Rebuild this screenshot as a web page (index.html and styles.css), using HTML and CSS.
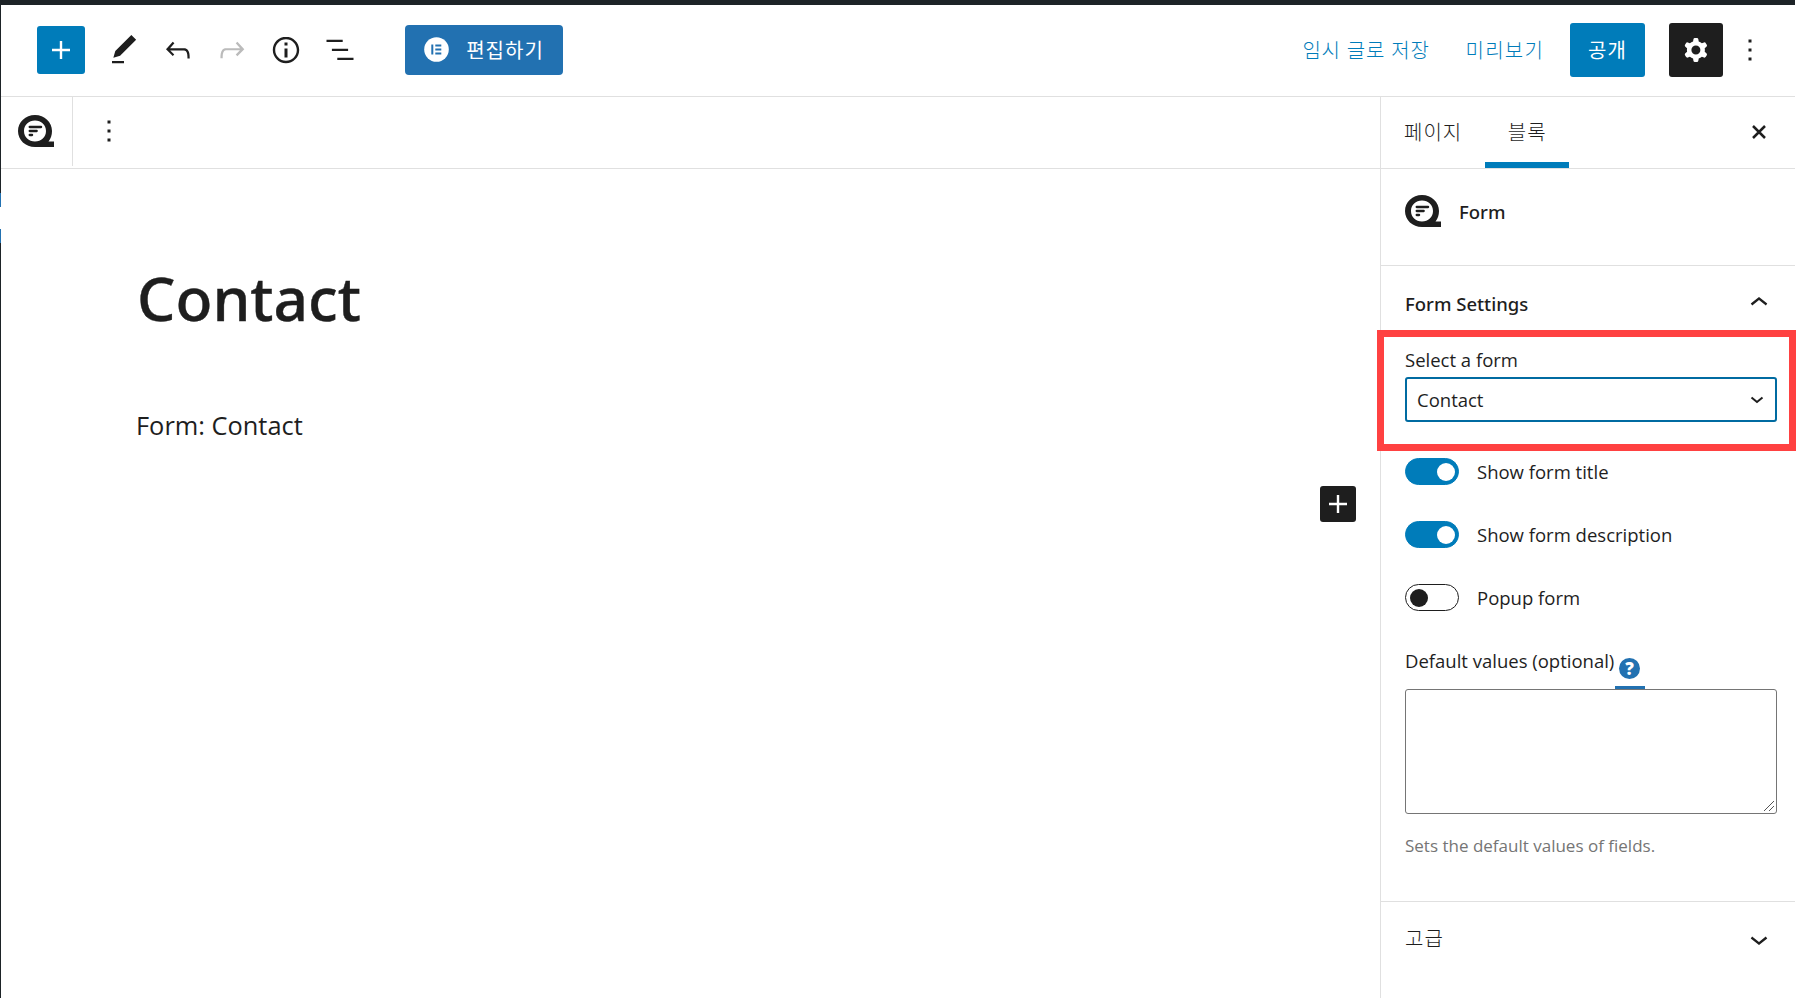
FILE: index.html
```html
<!DOCTYPE html>
<html lang="ko">
<head>
  <meta charset="UTF-8">
  <meta name="viewport" content="width=device-width, initial-scale=1.0">
  <title>Contact</title>
  <link rel="stylesheet" href="styles.css">
</head>
<body>

  <!-- Shared icon -->
  <svg class="defs" width="0" height="0">
    <symbol id="form-icon" viewBox="0 0 36 32">
      <path fill-rule="evenodd" d="M17 0C7.500 0 0 7 0 16s7.500 16 17 16h19v-5.500h-5.500C32.800 23.800 34 20 34 16 34 7 26.500 0 17 0zm0 5.500c6.200 0 11 4.600 11 10.500s-4.800 10.500-11 10.500S6 21.900 6 16 10.800 5.500 17 5.500z"/>
      <path d="M11.700 12h11.400M11.700 16h7M11.700 20h2.400" fill="none" stroke="currentColor" stroke-width="2.300" stroke-linecap="round"/>
    </symbol>
  </svg>

  <!-- Admin bar and collapsed admin menu -->
  <div class="admin-bar"></div>
  <div class="admin-menu">
    <span class="menu-current"></span>
    <span class="menu-open"></span>
    <span class="menu-current"></span>
  </div>

  <div class="editor">
    <!-- Header -->
    <header class="editor-header">
      <div class="header-tools">
        <button class="icon-button inserter">
          <svg class="icon" viewBox="0 0 24 24"><path d="M18 11.200h-5.200V6h-1.600v5.200H6v1.600h5.200V18h1.600v-5.200H18z"/></svg>
        </button>
        <button class="icon-button">
          <svg class="icon" viewBox="0 0 24 24"><path d="M20.100 5.100L16.900 2 6.200 12.700l-1.300 4.400 4.500-1.300L20.100 5.100zM4 20.800h8v-1.500H4v1.500z"/></svg>
        </button>
        <button class="icon-button">
          <svg class="icon" viewBox="0 0 24 24"><path d="M18.300 11.700c-.6-.6-1.400-.9-2.300-.9H6.700l2.900-3.300-1.100-1-4.500 5L8.500 16l1-1-2.700-2.700H16c.5 0 .9.2 1.300.5 1 1 1 3.400 1 4.500v.3h1.500v-.2c0-1.500 0-4.300-1.500-5.700z"/></svg>
        </button>
        <button class="icon-button disabled">
          <svg class="icon" viewBox="0 0 24 24"><path d="M15.600 6.500l-1.100 1 2.900 3.300H8c-.9 0-1.700.3-2.300.9-1.400 1.500-1.400 4.200-1.400 5.600v.2h1.500v-.3c0-1.100 0-3.500 1-4.500.3-.3.7-.5 1.300-.5h9.200L14.500 15l1.100 1.100 4.600-4.600-4.600-5z"/></svg>
        </button>
        <button class="icon-button">
          <svg class="icon" viewBox="0 0 24 24"><path fill-rule="evenodd" d="M12 3.200c-4.800 0-8.800 3.900-8.800 8.800 0 4.800 3.900 8.800 8.800 8.800 4.800 0 8.800-3.900 8.800-8.800 0-4.800-4-8.800-8.800-8.800zm0 16c-4 0-7.200-3.300-7.200-7.200C4.800 8 8 4.800 12 4.800s7.200 3.300 7.200 7.200c0 4-3.200 7.200-7.200 7.200zM11 17h2v-6h-2v6zm0-8h2V7h-2v2z"/></svg>
        </button>
        <button class="icon-button">
          <svg class="icon" viewBox="0 0 24 24"><path d="M13.800 5.200H3v1.500h10.800V5.200zm-3.600 12v1.500H21v-1.500H10.200zm7.200-6H6.600v1.500h10.800v-1.500z"/></svg>
        </button>
        <button class="elementor-button">
          <svg class="elementor-icon" viewBox="0 0 25 25">
            <circle cx="12.500" cy="12.500" r="12.300" fill="#fff"/>
            <path fill="#2271b1" d="M7.300 7.500h2v10h-2zM11.300 7.500h6v2h-6zM11.300 11.500h6v2h-6zM11.300 15.500h6v2h-6z"/>
          </svg>
          <span>편집하기</span>
        </button>
      </div>
      <div class="header-settings">
        <button class="text-button">임시 글로 저장</button>
        <button class="text-button preview">미리보기</button>
        <button class="publish-button">공개</button>
        <button class="settings-button">
          <svg class="icon" viewBox="0 0 24 24"><path fill-rule="evenodd" d="M10.289 4.836A1 1 0 0111.275 4h1.306a1 1 0 01.987.836l.244 1.466c.787.26 1.503.679 2.108 1.218l1.393-.522a1 1 0 011.216.437l.653 1.130a1 1 0 01-.23 1.273l-1.148.944a6.025 6.025 0 010 2.435l1.149.946a1 1 0 01.23 1.272l-.653 1.130a1 1 0 01-1.216.437l-1.394-.522c-.605.54-1.320.958-2.108 1.218l-.244 1.466a1 1 0 01-.987.836h-1.306a1 1 0 01-.986-.836l-.244-1.466a5.995 5.995 0 01-2.108-1.218l-1.394.522a1 1 0 01-1.217-.436l-.653-1.131a1 1 0 01.23-1.272l1.149-.946a6.026 6.026 0 010-2.435l-1.148-.944a1 1 0 01-.23-1.272l.653-1.131a1 1 0 011.217-.437l1.393.522a5.994 5.994 0 012.108-1.218l.244-1.466zM14.929 12a3 3 0 11-6 0 3 3 0 016 0z"/></svg>
        </button>
        <button class="more-button">
          <svg class="icon" viewBox="0 0 24 24"><path d="M13 19h-2v-2h2v2zm0-6h-2v-2h2v2zm0-6h-2V5h2v2z"/></svg>
        </button>
      </div>
    </header>

    <div class="editor-body">
      <!-- Content -->
      <main class="content">
        <div class="block-toolbar">
          <div class="block-type">
            <svg class="form-icon"><use href="#form-icon"/></svg>
          </div>
          <svg class="icon" viewBox="0 0 24 24"><path d="M13 19h-2v-2h2v2zm0-6h-2v-2h2v2zm0-6h-2V5h2v2z"/></svg>
        </div>
        <div class="canvas">
          <h1 class="post-title">Contact</h1>
          <p class="form-block">Form: Contact</p>
          <button class="block-appender">
            <svg class="icon" viewBox="0 0 24 24"><path d="M18 11.200h-5.200V6h-1.600v5.200H6v1.600h5.200V18h1.600v-5.200H18z"/></svg>
          </button>
        </div>
      </main>

      <!-- Sidebar -->
      <aside class="sidebar">
        <div class="tabs">
          <button class="tab">페이지</button>
          <button class="tab active">블록</button>
          <button class="close-button">
            <svg class="close-icon" viewBox="0 0 16 16"><path d="M2 2l12 12M14 2L2 14"/></svg>
          </button>
        </div>

        <div class="block-card">
          <svg class="form-icon"><use href="#form-icon"/></svg>
          <h2 class="block-name">Form</h2>
        </div>

        <section class="panel">
          <div class="panel-title">
            <h2>Form Settings</h2>
            <svg class="icon" viewBox="0 0 24 24"><path d="M6.500 12.400L12 8l5.500 4.400-.9 1.200L12 10l-4.500 3.600-1-1.200z"/></svg>
          </div>

          <div class="select-field">
            <label class="label">Select a form</label>
            <div class="select">
              <span>Contact</span>
              <svg class="select-arrow" viewBox="0 0 14 8"><path d="M1.500 1.500L7 6l5.500-4.500"/></svg>
            </div>
            <div class="highlight"></div>
          </div>

          <div class="toggle-row">
            <span class="toggle on"></span>
            <span>Show form title</span>
          </div>
          <div class="toggle-row">
            <span class="toggle on"></span>
            <span>Show form description</span>
          </div>
          <div class="toggle-row">
            <span class="toggle"></span>
            <span>Popup form</span>
          </div>

          <div class="textarea-label">
            <span class="label">Default values (optional)</span>
            <a class="help-link"><span class="help-icon">?</span></a>
          </div>
          <div class="textarea-field">
            <textarea class="textarea"></textarea>
            <svg class="resize-grip" viewBox="0 0 12 12"><path d="M1 11L11 1M6 11l5-5"/></svg>
          </div>
          <p class="help-text">Sets the default values of fields.</p>
        </section>

        <section class="panel-title advanced">
          <h2>고급</h2>
          <svg class="icon" viewBox="0 0 24 24"><path d="M17.500 11.600L12 16l-5.500-4.400.9-1.200L12 14l4.500-3.600 1 1.200z"/></svg>
        </section>
      </aside>
    </div>
  </div>

</body>
</html>
```
FILE: styles.css
```css
/* Global styles */
* {
  box-sizing: border-box;
}

body {
  font-family: "Open Sans", "Noto Sans CJK KR", sans-serif;
  font-size: 18.5px;
  margin: 0;
  height: 998px;
  overflow: hidden;
  background-color: #fff;
  color: #1e1e1e;
  display: grid;
  grid-template: 5px 993px / 1px 1794px;
}

button {
  font-family: inherit;
  font-size: inherit;
  color: inherit;
  background: none;
  border: none;
  padding: 0;
  display: flex;
  align-items: center;
  justify-content: center;
  white-space: nowrap;
}

h1, h2, p {
  margin: 0;
}

.defs {
  position: absolute;
}

.icon {
  width: 36px;
  height: 36px;
  fill: currentColor;
  flex: none;
}

.form-icon {
  width: 36px;
  height: 32px;
  fill: currentColor;
  flex: none;
}

/* Admin bar and menu */
.admin-bar {
  grid-column: 1 / 3;
  background-color: #1d2327;
}

.admin-menu {
  background-color: #1d2327;
  padding-top: 188px;
}

.admin-menu span {
  display: block;
}

.menu-current {
  height: 14px;
  background-color: #2271b1;
}

.menu-open {
  height: 22px;
  background-color: #fff;
}

/* Header */
.editor {
  display: flex;
  flex-direction: column;
}

.editor-header {
  height: 92px;
  flex: none;
  display: flex;
  justify-content: space-between;
  align-items: center;
  padding: 0 27px 2px 36px;
  border-bottom: 1px solid #e0e0e0;
}

.header-tools,
.header-settings {
  display: flex;
  align-items: center;
}

.header-tools,
.header-settings,
.tabs {
  font-family: "Noto Sans", "Noto Sans CJK KR", sans-serif;
}

.icon-button {
  width: 54px;
  height: 54px;
}

.inserter {
  width: 48px;
  height: 48px;
  margin-right: 12px;
  border-radius: 3px;
  background-color: #007cba;
  color: #fff;
}

.disabled {
  color: #bbb;
}

.elementor-button {
  width: 158px;
  height: 50px;
  margin-left: 38px;
  gap: 17px;
  border-radius: 4px;
  background-color: #2271b1;
  color: #fff;
  font-size: 20px;
  letter-spacing: 1px;
}

.elementor-icon {
  width: 25px;
  height: 25px;
}

.header-settings {
  font-size: 20px;
}

.text-button {
  color: #007cba;
  font-weight: 300;
  letter-spacing: 0.8px;
}

.preview {
  margin: 0 26px 0 36px;
  letter-spacing: 1.2px;
}

.publish-button {
  width: 75px;
  height: 54px;
  border-radius: 3px;
  background-color: #007cba;
  color: #fff;
  letter-spacing: 1px;
}

.settings-button {
  width: 54px;
  height: 54px;
  margin-left: 24px;
  border-radius: 3px;
  background-color: #1e1e1e;
  color: #fff;
}

.more-button {
  margin-left: 9px;
}

/* Content */
.editor-body {
  flex: 1;
  display: flex;
}

.content {
  flex: 1;
}

.block-toolbar {
  height: 72px;
  display: flex;
  align-items: center;
  gap: 18px;
  padding-bottom: 3px;
  border-bottom: 1px solid #e0e0e0;
}

.block-type {
  width: 72px;
  height: 70px;
  display: flex;
  align-items: center;
  padding: 0 0 1px 17px;
  border-right: 1px solid #e0e0e0;
}

.canvas {
  padding: 87px 24px 0 135px;
  display: flex;
  flex-direction: column;
}

.post-title {
  font-family: "Noto Sans", sans-serif;
  font-size: 60.5px;
  font-weight: 500;
  line-height: 84px;
  padding-left: 1px;
  -webkit-text-stroke: 0.4px currentColor;
}

.form-block {
  margin-top: 67px;
  font-size: 25.4px;
  line-height: 36px;
}

.block-appender {
  width: 36px;
  height: 36px;
  margin-top: 43px;
  align-self: flex-end;
  border-radius: 3px;
  background-color: #1e1e1e;
  color: #fff;
}

/* Sidebar */
.sidebar {
  width: 415px;
  border-left: 1px solid #e0e0e0;
}

.tabs {
  height: 72px;
  display: flex;
  border-bottom: 1px solid #e0e0e0;
}

.tab {
  padding: 0 23px 2px;
  font-size: 20px;
  font-weight: 300;
  letter-spacing: 1px;
}

.tab.active {
  width: 84px;
  padding: 0 0 2px;
  box-shadow: inset 0 -6px 0 #007cba;
}

.close-button {
  margin-left: auto;
  margin-right: 28px;
  padding-bottom: 2px;
}

.close-icon {
  width: 16px;
  height: 16px;
  fill: none;
  stroke: currentColor;
  stroke-width: 2.5;
}

.block-card {
  height: 97px;
  display: flex;
  gap: 18px;
  padding: 26px 24px 0;
  border-bottom: 1px solid #e0e0e0;
}

.block-name {
  font-family: "Noto Sans", sans-serif;
  font-size: 18.5px;
  font-weight: 500;
  line-height: 34px;
}

.panel {
  height: 636px;
  padding: 0 18px 0 24px;
  border-bottom: 1px solid #e0e0e0;
}

.panel-title {
  height: 76px;
  display: flex;
  justify-content: space-between;
  align-items: center;
  padding-bottom: 2px;
}

.panel-title h2 {
  font-family: "Noto Sans", "Noto Sans CJK KR", sans-serif;
  font-size: 18.5px;
  font-weight: 500;
}

.select-field {
  position: relative;
  height: 116px;
  padding-top: 4px;
}

.label {
  display: block;
  line-height: 28px;
}

.select {
  height: 45px;
  margin-top: 3px;
  display: flex;
  justify-content: space-between;
  align-items: center;
  padding: 0 11px 0 10px;
  border: 2px solid #006ba1;
  border-radius: 3px;
}

.select-arrow {
  width: 14px;
  height: 8px;
  fill: none;
  stroke: currentColor;
  stroke-width: 2;
}

.highlight {
  position: absolute;
  top: -12px;
  left: -28px;
  width: 419px;
  height: 121px;
  border: 7px solid #ff4141;
}

.toggle-row {
  height: 27px;
  margin-bottom: 36px;
  display: flex;
  align-items: center;
  gap: 18px;
}

.toggle {
  width: 54px;
  height: 27px;
  display: flex;
  align-items: center;
  padding: 0 4px;
  border: 1px solid #1e1e1e;
  border-radius: 14px;
}

.toggle::before {
  content: "";
  width: 18px;
  height: 18px;
  border-radius: 50%;
  background-color: #1e1e1e;
}

.toggle.on {
  justify-content: flex-end;
  padding: 0 3px;
  background-color: #007cba;
  border-color: #007cba;
}

.toggle.on::before {
  background-color: #fff;
}

.textarea-label {
  height: 42px;
  display: flex;
}

.textarea-label .label {
  width: 210px;
  white-space: nowrap;
}

.help-link {
  width: 30px;
  padding: 11px 0 0 4px;
  border-bottom: 3px solid #2271b1;
}

.help-icon {
  display: block;
  width: 21px;
  height: 21px;
  border-radius: 50%;
  background-color: #2271b1;
  color: #fff;
  font-size: 17px;
  font-weight: 800;
  line-height: 21px;
  text-align: center;
}

.textarea-field {
  position: relative;
}

.textarea {
  display: block;
  width: 372px;
  height: 125px;
  border: 1px solid #757575;
  border-radius: 3px;
  resize: none;
}

.resize-grip {
  position: absolute;
  right: 2px;
  bottom: 2px;
  width: 12px;
  height: 12px;
  fill: none;
  stroke: #555;
}

.help-text {
  margin-top: 18px;
  font-size: 17px;
  line-height: 28px;
  color: #757575;
}

.advanced {
  padding: 0 18px 2px 24px;
}

.advanced h2 {
  font-size: 20px;
  font-weight: 300;
  letter-spacing: 1px;
  padding-bottom: 3px;
}
```
